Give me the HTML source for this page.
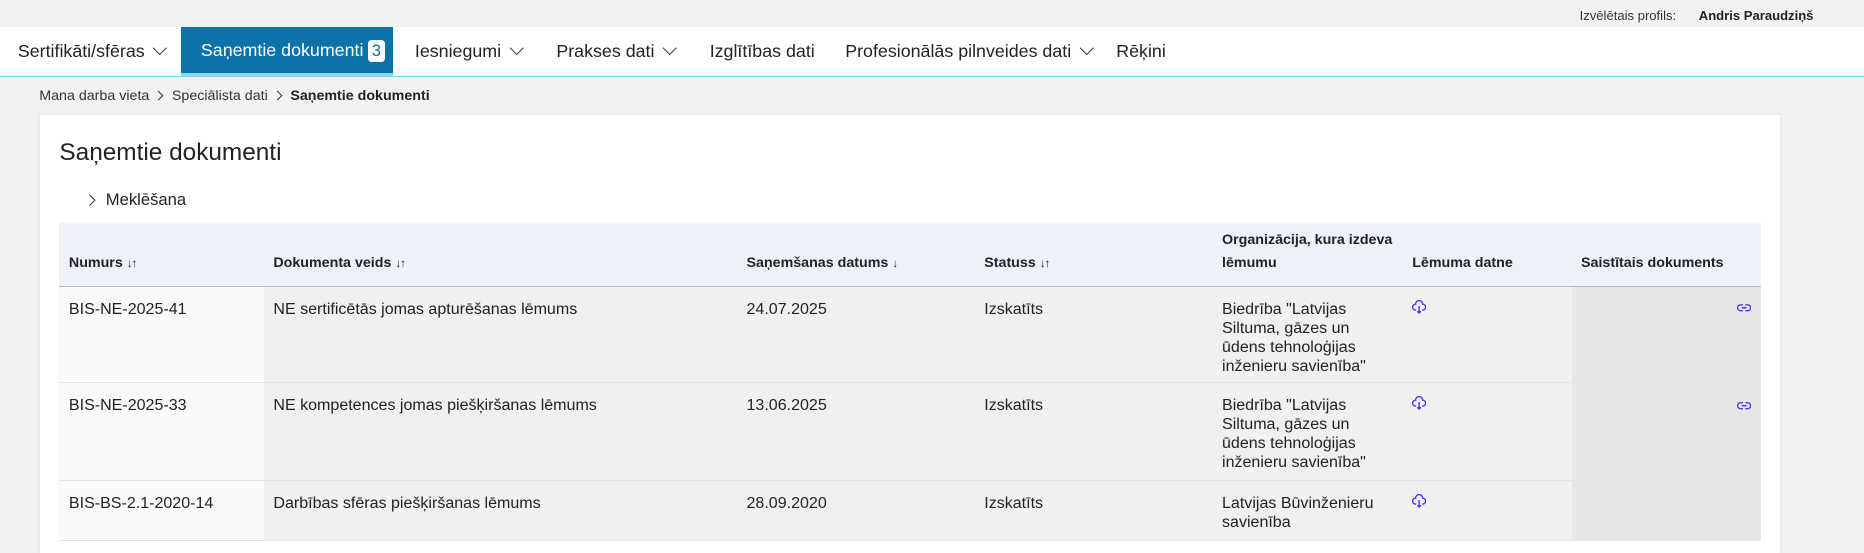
<!DOCTYPE html>
<html><head><meta charset="utf-8"><style>
*{box-sizing:border-box;margin:0;padding:0}
html,body{width:1864px;height:553px;overflow:hidden;background:#f2f2f2}
#w{zoom:1.18878;width:1568px;height:465px;position:relative;font-family:"Liberation Sans",Arial,sans-serif;color:#222;background:#f2f2f2;overflow:hidden}
.top{position:absolute;top:2px;left:0;width:1568px;height:21px;background:#f2f2f2;font-size:11px;white-space:nowrap}
.top .p{position:absolute;left:1232px;width:178px;text-align:right;top:5px;color:#333}
.top .n{position:absolute;left:1429px;top:5px;font-weight:bold;color:#222;white-space:nowrap}
.nav{position:absolute;top:23px;left:0;right:0;height:42px;background:#fff;border-bottom:1px solid #7fd0ee}
.nav .i{position:absolute;top:0;height:41px;line-height:41px;font-size:15px;color:#222}
.nav .a{background:#0d72a8;color:#fff;border-bottom:3px solid #8ad8f7;line-height:39px}
.badge{display:inline-block;background:#fff;color:#0d72a8;border-radius:3px;padding:0 3px;line-height:18px;margin-left:4px;font-size:14px}
.ch{display:inline-block;width:8px;height:8px;border-right:1.3px solid #333;border-bottom:1.3px solid #333;transform:rotate(45deg);margin-left:9px;position:relative;top:-4px}
.bc{position:absolute;top:74px;left:33px;font-size:12px;color:#333}
.bc b{color:#222}
.bc i{display:inline-block;width:6px;height:6px;border-right:1.1px solid #333;border-bottom:1.1px solid #333;transform:rotate(-45deg);margin:0 8px 1px 5px}
.card{position:absolute;left:34px;top:97px;width:1463px;height:368px;background:#fff;box-shadow:0 0 3px #ddd}
h1{position:absolute;left:16px;top:20px;font-size:20.5px;font-weight:normal;color:#222}
.mk{position:absolute;left:38px;top:63px;font-size:14px}
.mk i{display:inline-block;width:7px;height:7px;border-right:1.2px solid #333;border-bottom:1.2px solid #333;transform:rotate(-45deg);margin-right:10px;position:relative;top:-1px}
table{position:absolute;left:16px;top:91px;width:1431px;border-collapse:collapse;font-size:13.5px}
th{background:#edf2fa;height:53px;text-align:left;font-size:12px;font-weight:bold;vertical-align:bottom;padding:0 8px 10px;border-bottom:1.5px solid #bbb;line-height:19px}
td{vertical-align:top;padding:11px 8px 4px;border-bottom:1px solid #e2e2e2;background:#f0f0f0;line-height:16px}
td.c1{background:#fafafa}
td.c7{background:#e6e6e6;border-bottom:none;text-align:right}
.s{font-size:10px;font-weight:bold;letter-spacing:-1px}
svg{display:inline-block}
</style></head><body><div id="w">
<div class="top"><span class="p">Izvēlētais profils:</span><span class="n">Andris Paraudziņš</span></div>
<div class="nav">
<div class="i" style="left:15px">Sertifikāti/sfēras<span class="ch"></span></div>
<div class="i a" style="left:152px;width:179px;padding-left:17px">Saņemtie dokumenti<span class="badge">3</span></div>
<div class="i" style="left:349px">Iesniegumi<span class="ch"></span></div>
<div class="i" style="left:468px">Prakses dati<span class="ch"></span></div>
<div class="i" style="left:597px">Izglītības dati</div>
<div class="i" style="left:711px">Profesionālās pilnveides dati<span class="ch"></span></div>
<div class="i" style="left:939px">Rēķini</div>
</div>
<div class="bc">Mana darba vieta<i></i>Speciālista dati<i></i><b>Saņemtie dokumenti</b></div>
<div class="card">
<h1>Saņemtie dokumenti</h1>
<div class="mk"><i></i>Meklēšana</div>
<table>
<colgroup><col style="width:172px"><col style="width:398px"><col style="width:200px"><col style="width:200px"><col style="width:160px"><col style="width:142px"><col style="width:159px"></colgroup>
<tr><th>Numurs <span class="s">↓↑</span></th><th>Dokumenta veids <span class="s">↓↑</span></th><th>Saņemšanas datums <span class="s">↓</span></th><th>Statuss <span class="s">↓↑</span></th><th>Organizācija, kura izdeva lēmumu</th><th>Lēmuma datne</th><th>Saistītais dokuments</th></tr>
<tr style="height:81px"><td class="c1">BIS-NE-2025-41</td><td>NE sertificētās jomas apturēšanas lēmums</td><td>24.07.2025</td><td>Izskatīts</td><td>Biedrība "Latvijas Siltuma, gāzes un ūdens tehnoloģijas inženieru savienība"</td><td><svg width="12" height="12" viewBox="0 0 12 12" fill="none" stroke="#4a3cf0" stroke-width="1.2"><path d="M3.5 8.5H3A2.5 2.5 0 0 1 3 3.5 3 3 0 0 1 9 3.5a2.5 2.5 0 0 1 0 5h-.5M6 5v6M4.5 9.5 6 11l1.5-1.5"/></svg></td><td class="c7" rowspan="3" style="vertical-align:top;padding-top:10px"><svg width="12" height="8" viewBox="0 0 12 8" fill="none" stroke="#4a3cf0" stroke-width="1.2"><path d="M5 1.5H3a2.5 2.5 0 0 0 0 5h2M7 1.5h2a2.5 2.5 0 0 1 0 5H7M4 4h4"/></svg><div style="height:66px"></div><svg width="12" height="8" viewBox="0 0 12 8" fill="none" stroke="#4a3cf0" stroke-width="1.2"><path d="M5 1.5H3a2.5 2.5 0 0 0 0 5h2M7 1.5h2a2.5 2.5 0 0 1 0 5H7M4 4h4"/></svg></td></tr>
<tr style="height:82px"><td class="c1">BIS-NE-2025-33</td><td>NE kompetences jomas piešķiršanas lēmums</td><td>13.06.2025</td><td>Izskatīts</td><td>Biedrība "Latvijas Siltuma, gāzes un ūdens tehnoloģijas inženieru savienība"</td><td><svg width="12" height="12" viewBox="0 0 12 12" fill="none" stroke="#4a3cf0" stroke-width="1.2"><path d="M3.5 8.5H3A2.5 2.5 0 0 1 3 3.5 3 3 0 0 1 9 3.5a2.5 2.5 0 0 1 0 5h-.5M6 5v6M4.5 9.5 6 11l1.5-1.5"/></svg></td></tr>
<tr style="height:51px"><td class="c1">BIS-BS-2.1-2020-14</td><td>Darbības sfēras piešķiršanas lēmums</td><td>28.09.2020</td><td>Izskatīts</td><td>Latvijas Būvinženieru savienība</td><td><svg width="12" height="12" viewBox="0 0 12 12" fill="none" stroke="#4a3cf0" stroke-width="1.2"><path d="M3.5 8.5H3A2.5 2.5 0 0 1 3 3.5 3 3 0 0 1 9 3.5a2.5 2.5 0 0 1 0 5h-.5M6 5v6M4.5 9.5 6 11l1.5-1.5"/></svg></td></tr>
</table>
</div>
</div></body></html>
